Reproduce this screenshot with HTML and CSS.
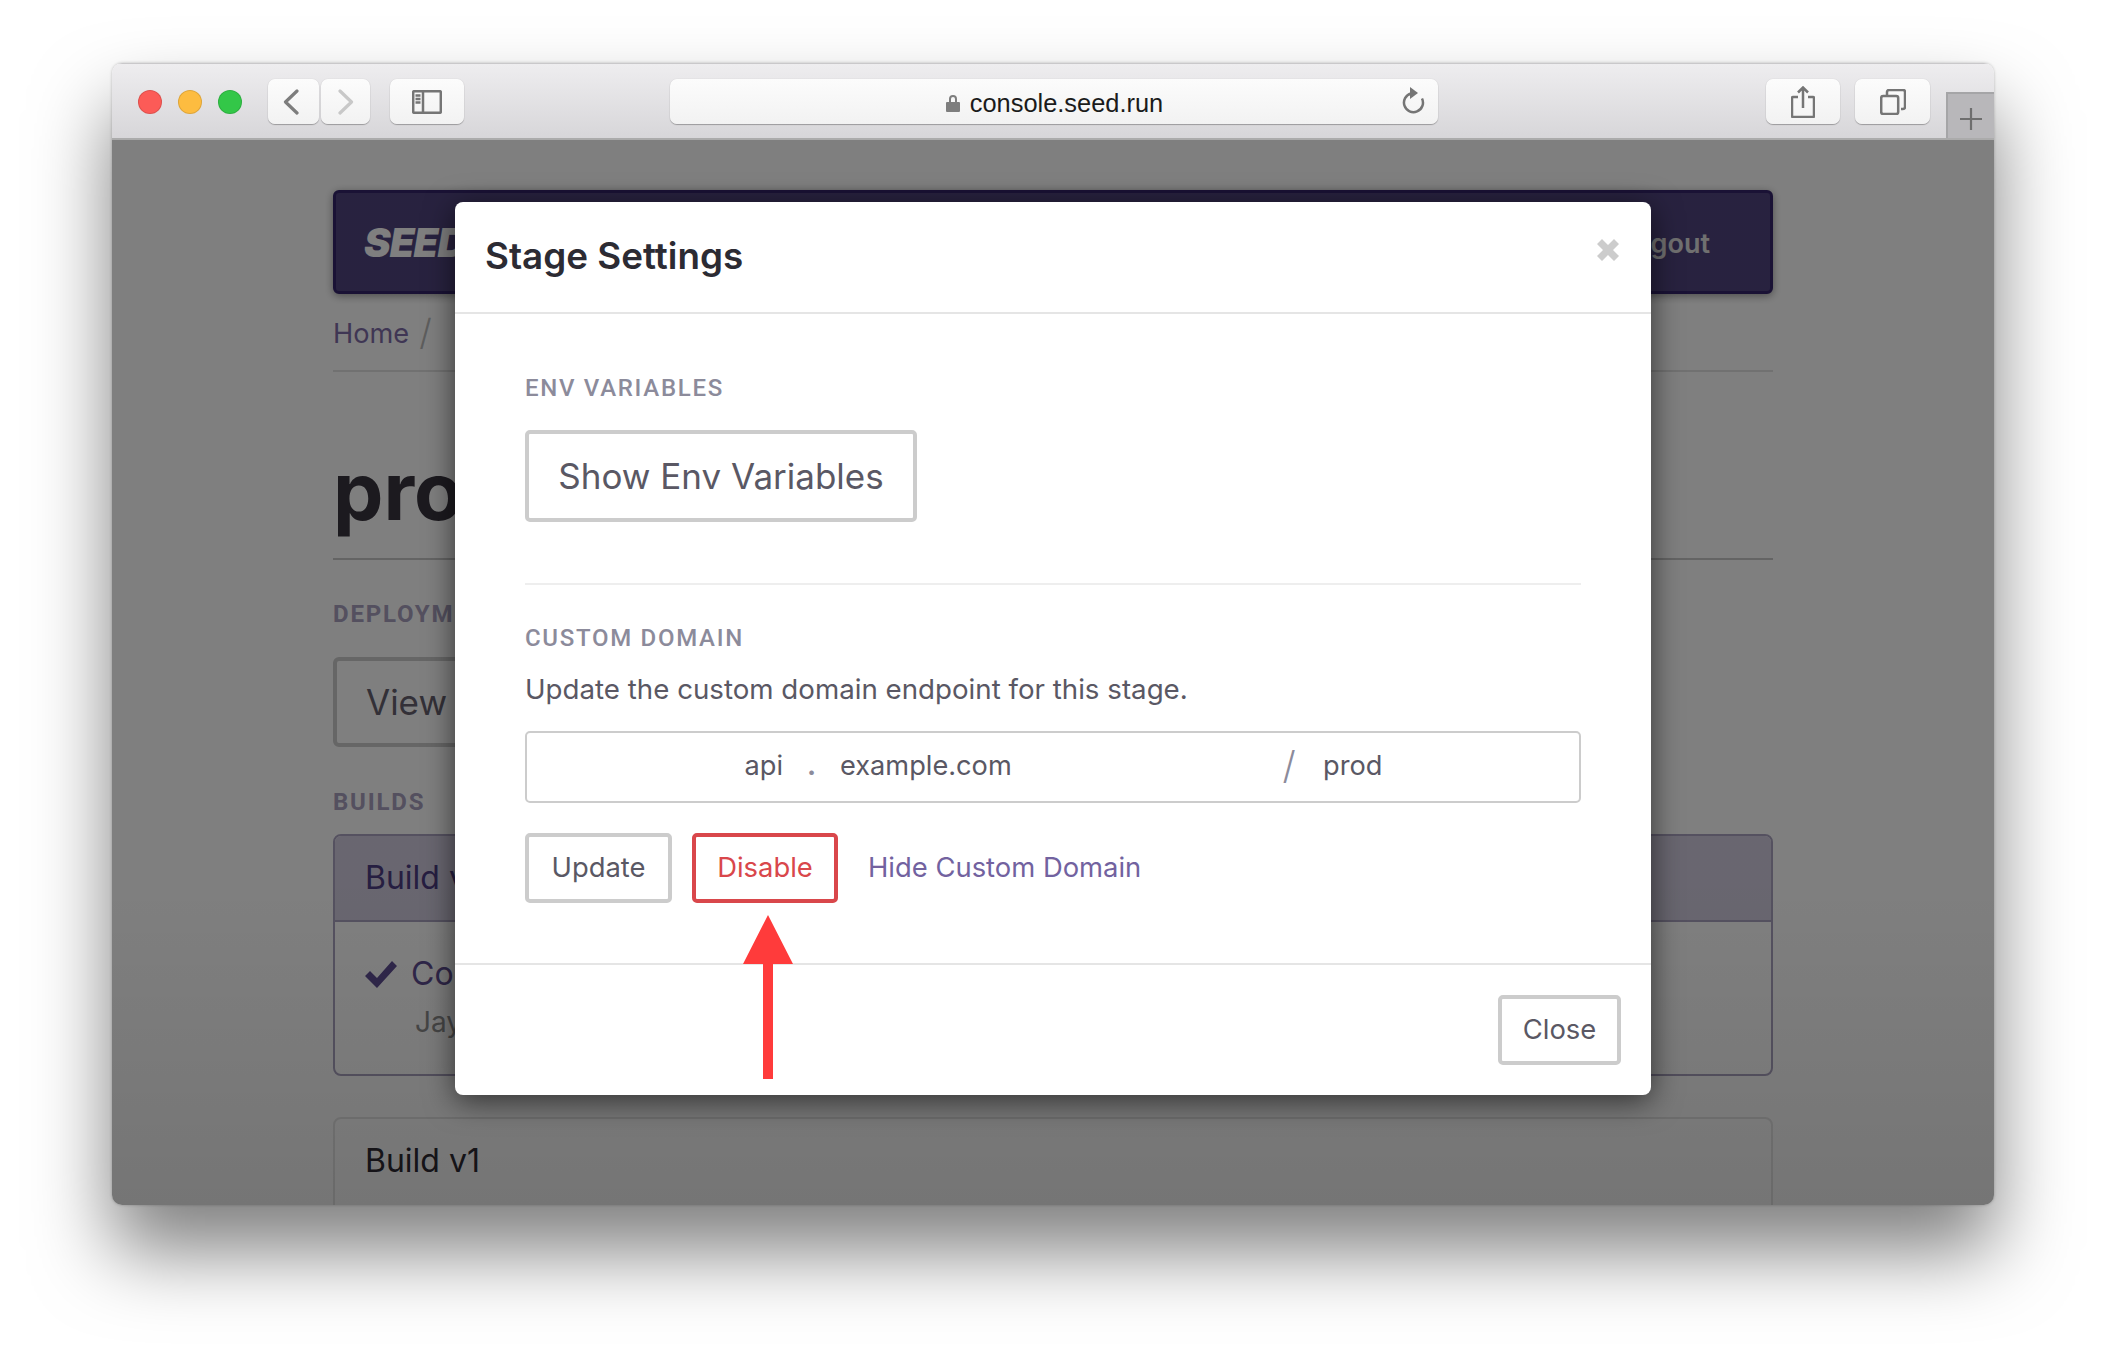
FILE: index.html
```html
<!DOCTYPE html>
<html lang="en">
<head>
<meta charset="utf-8">
<title>Stage Settings</title>
<link rel="stylesheet" href="styles.css">
</head>
<body>
<div class="window">
  <header class="toolbar">
    <div class="lights"><span class="light red"></span><span class="light yellow"></span><span class="light green"></span></div>
    <div class="nav-btns">
      <span class="tb-btn back"><svg width="16" height="26" viewBox="0 0 16 26"><path class="ic" d="M14 2 2.500 13 14 24"/></svg></span>
      <span class="tb-btn forward"><svg width="16" height="26" viewBox="0 0 16 26"><path class="ic ic-off" d="M2 2l11.500 11L2 24"/></svg></span>
    </div>
    <span class="tb-btn sidebar"><svg width="30" height="24" viewBox="0 0 30 24"><rect class="ic-thin" x="1.200" y="1.200" width="27.600" height="21.600" rx="1"/><path class="ic-thin" d="M11 1v22M3.500 5.500h5M3.500 9h5M3.500 12.500h5"/></svg></span>
    <div class="urlbar">
      <span class="url"><svg class="lock" width="16" height="20" viewBox="0 0 16 20"><path class="lock-shape" d="M4 9V6a4 4 0 0 1 8 0v3h2a1 1 0 0 1 1 1v8a1 1 0 0 1-1 1H2a1 1 0 0 1-1-1v-8a1 1 0 0 1 1-1zm2 0h4V6a2 2 0 0 0-4 0z"/></svg>console.seed.run</span>
      <svg class="reload" width="24" height="28" viewBox="0 0 24 28"><path class="ic-thin" d="M10 7.500a9.500 9.500 0 1 0 11 5"/><path class="arrowhead" d="M9 1l8 6-8 6z"/></svg>
    </div>
    <span class="tb-btn share"><svg width="24" height="32" viewBox="0 0 24 32"><path class="ic-thin" d="M7 11H2a1 1 0 0 0-1 1v18a1 1 0 0 0 1 1h20a1 1 0 0 0 1-1V12a1 1 0 0 0-1-1h-5M12 22V2M7 6.500 12 1.500 17 6.500"/></svg></span>
    <span class="tb-btn tabs"><svg width="26" height="26" viewBox="0 0 26 26"><rect class="ic-thin" x="1.200" y="7" width="17" height="18" rx="2"/><path class="ic-thin" d="M7 7V3a2 2 0 0 1 2-2h14a2 2 0 0 1 2 2v15a2 2 0 0 1-2 2h-2"/></svg></span>
    <span class="newtab"><svg width="24" height="24" viewBox="0 0 24 24"><path class="plus" d="M12 1v22M1 12h22"/></svg></span>
  </header>

  <div class="viewport">
    <main class="page">
      <nav class="topnav"><span class="brand">SEED</span><span class="logout">Logout</span></nav>
      <div class="crumbs"><span class="crumb-link">Home</span><span class="crumb-sep">/</span></div>
      <h1 class="stage-title">prod</h1>
      <div class="page-label label-deploy">DEPLOYMENTS</div>
      <div class="page-btn">View Deployments</div>
      <div class="page-label label-builds">BUILDS</div>
      <section class="card active">
        <div class="card-head">Build v2</div>
        <div class="card-body">
          <div class="commit"><svg class="check" width="32" height="28" viewBox="0 0 32 28"><path d="M0 16l5-5 7 7L27 1l5 5-20 22z"/></svg><span>Commit</span></div>
          <div class="author">Jay</div>
        </div>
      </section>
      <section class="card plain">
        <div class="card-head plain-head">Build v1</div>
      </section>
    </main>
    <div class="backdrop"></div>
    <aside class="modal">
      <div class="modal-head">
        <h2 class="modal-title">Stage Settings</h2>
        <svg class="close-x" width="22" height="22" viewBox="0 0 22 22"><path d="M5 0l6 6 6-6 5 5-6 6 6 6-5 5-6-6-6 6-5-5 6-6-6-6z"/></svg>
      </div>
      <div class="modal-body">
        <div class="label">ENV VARIABLES</div>
        <button class="btn btn-lg">Show Env Variables</button>
        <hr class="divider">
        <div class="label">CUSTOM DOMAIN</div>
        <p class="desc">Update the custom domain endpoint for this stage.</p>
        <div class="domain-input">
          <span class="f-sub">api</span>
          <span class="f-dot">.</span>
          <span class="f-domain">example.com</span>
          <span class="f-slash">/</span>
          <span class="f-path">prod</span>
        </div>
        <div class="actions">
          <button class="btn btn-md btn-update">Update</button>
          <button class="btn btn-md btn-danger">Disable</button>
          <a class="link" href="#">Hide Custom Domain</a>
        </div>
      </div>
      <div class="modal-foot"><button class="btn btn-md btn-close">Close</button></div>
    </aside>
    <svg class="arrow" width="50" height="164" viewBox="0 0 50 164"><path d="M25 0l25 49H30v115H20V49H0z"/></svg>
  </div>
</div>
</body>
</html>
```

FILE: styles.css
```css
* { box-sizing: border-box; }
html, body { margin: 0; height: 100%; }
body {
  background: #fff;
  padding: 63px 112px 0;
  font-family: Inter, "Liberation Sans", sans-serif;
  overflow: hidden;
}
.window {
  width: 1882px;
  height: 1142px;
  border-radius: 10px;
  display: flex;
  flex-direction: column;
  box-shadow: 0 46px 78px rgba(0,0,0,.5), 0 0 3px rgba(0,0,0,.25);
  overflow: hidden;
  background: #fff;
}
.toolbar {
  height: 77px;
  flex: none;
  display: flex;
  align-items: flex-start;
  padding-top: 15px;
  background: linear-gradient(#eeedef, #d7d6d9);
  border-top: 1px solid #c9c8ca;
  border-bottom: 2px solid #ababab;
  position: relative;
}
.lights { display: flex; gap: 16px; margin: 11px 0 0 26px; }
.light { width: 24px; height: 24px; border-radius: 50%; border: 1px solid rgba(0,0,0,.12); }
.red { background: #fc5b57; }
.yellow { background: #fdbc40; }
.green { background: #33c748; }
.nav-btns { display: flex; gap: 2px; margin-left: 26px; }
.tb-btn {
  height: 45px;
  display: flex;
  align-items: center;
  justify-content: center;
  background: linear-gradient(#fcfcfc, #f2f2f2);
  border-radius: 7px;
  box-shadow: 0 1px 1px rgba(0,0,0,.28), 0 0 1px rgba(0,0,0,.2);
}
.back { width: 51px; padding-right: 6px; }
.forward { width: 49px; padding-right: 0; }
.sidebar { width: 74px; margin-left: 20px; }
.urlbar {
  width: 768px;
  height: 45px;
  margin-left: 206px;
  position: relative;
  display: flex;
  align-items: center;
  justify-content: center;
  background: linear-gradient(#fcfcfc, #f2f2f2);
  border-radius: 7px;
  box-shadow: 0 1px 1px rgba(0,0,0,.28), 0 0 1px rgba(0,0,0,.2);
}
.url {
  display: flex;
  align-items: center;
  gap: 9px;
  padding-top: 3px;
  font: 25.4px "Liberation Sans", sans-serif;
  color: #1b1b1b;
}
.lock-shape { fill: #7e7e7e; fill-rule: evenodd; }
.reload { position: absolute; right: 13px; top: 7px; }
.ic { fill: none; stroke: #7d7d7d; stroke-width: 3.200; stroke-linecap: round; stroke-linejoin: round; }
.ic-off { stroke: #c8c8c8; }
.ic-thin { fill: none; stroke: #757575; stroke-width: 2.500; }
.arrowhead { fill: #757575; }
.share { width: 74px; margin-left: 328px; }
.tabs { width: 75px; margin-left: 15px; }
.newtab {
  position: absolute;
  right: 0;
  bottom: 0;
  width: 48px;
  height: 46px;
  display: flex;
  align-items: center;
  justify-content: center;
  padding-top: 6px;
  background: #b8b7ba;
  border: 2px solid #a5a5a7;
  border-right: 0;
  border-bottom: 0;
}
.plus { fill: none; stroke: #6e6e6e; stroke-width: 2.200; }

.viewport { position: relative; flex: 1; overflow: hidden; }
.page { width: 1440px; margin-left: 221px; padding-top: 50px; color: #38343e; }
.topnav {
  height: 104px;
  background: #50447f;
  border: 3px solid #34246a;
  border-radius: 6px;
  display: flex;
  align-items: center;
  justify-content: space-between;
  padding: 0 60px 0 28px;
  box-shadow: 0 2px 8px rgba(0,0,0,.4);
}
.brand { font: italic 900 40px Inter, sans-serif; color: #fff; letter-spacing: -1px; }
.logout { font-size: 27px; font-weight: 600; color: #e0e0e0; padding-top: 2px; }
.crumbs {
  height: 78px;
  border-bottom: 2px solid #e2e2e2;
  display: flex;
  align-items: center;
  gap: 10px;
  font-size: 27.200px;
}
.crumb-link { color: #7e6da8; padding-top: 2px; }
.crumb-sep { color: #bbb; font-size: 36px; font-weight: 300; }
.stage-title {
  height: 188px;
  margin: 0;
  padding-top: 74px;
  border-bottom: 2px solid #c8c8c8;
  font-size: 80px;
  line-height: 90px;
  font-weight: 700;
}
.page-label { font: 700 24px Roboto, sans-serif; letter-spacing: 1.800px; color: #a8a0be; }
.label-deploy { margin-top: 42px; line-height: 24px; }
.page-btn {
  width: 500px;
  height: 90px;
  margin-top: 31px;
  padding-left: 29px;
  border: 4px solid #ccc;
  border-radius: 6px;
  font-size: 35px;
  line-height: 82px;
  color: #66616f;
}
.label-builds { margin-top: 43px; line-height: 24px; }
.card { border-radius: 8px; border: 2px solid #aaa3c0; }
.active { height: 242px; margin-top: 20px; overflow: hidden; }
.card-head {
  height: 86px;
  padding-left: 30px;
  font-size: 32px;
  line-height: 84px;
  color: #4c3c82;
  background: #d2cde0;
  border-bottom: 2px solid #aaa3c0;
}
.card-body { padding: 32px 30px; font-size: 32px; color: #5f4e93; }
.commit { display: flex; align-items: center; gap: 14px; }
.check { fill: #5f4e93; }
.author { margin: 12px 0 0 50px; font-size: 28px; color: #8f8f8f; }
.plain { height: 200px; margin-top: 41px; border: 2px solid #e6e6e6; }
.plain-head { background: none; border: 0; color: #2e2a33; height: 83px; line-height: 83px; }

.backdrop { position: absolute; inset: 0; background: linear-gradient(rgba(0,0,0,.5) 70%, rgba(0,0,0,.54)); }
.modal {
  position: absolute;
  left: 343px;
  top: 62px;
  width: 1196px;
  height: 893px;
  background: #fff;
  border-radius: 8px;
  box-shadow: 0 6px 30px rgba(0,0,0,.6);
  display: flex;
  flex-direction: column;
}
.modal-head {
  height: 112px;
  flex: none;
  padding: 0 30px;
  border-bottom: 2px solid #e5e5e5;
  display: flex;
  justify-content: space-between;
}
.modal-title {
  margin: 29px 0 0;
  font-size: 36.800px;
  line-height: 50px;
  font-weight: 600;
  color: #2c2b33;
}
.close-x { fill: #cccccc; margin: 37px 2px 0 0; }
.modal-body { flex: 1; padding: 62px 70px 0; }
.label {
  font: 500 24px/24px Roboto, sans-serif;
  letter-spacing: 1.700px;
  color: #8c8b9b;
}
.btn {
  display: block;
  font-family: inherit;
  background: #fff;
  border: 4px solid #ccc;
  border-radius: 5px;
  color: #5a5864;
  padding: 0;
  text-align: center;
}
.btn-lg { width: 392px; height: 92px; margin-top: 30px; font-size: 35px; }
.divider { height: 2px; margin: 61px 0 41px; border: 0; background: #eeeeee; }
.desc { margin: 19px 0 22px; font-size: 27.700px; line-height: 40px; color: #5a5864; }
.domain-input {
  height: 72px;
  display: flex;
  align-items: center;
  padding-bottom: 4px;
  border: 2px solid #ccc;
  border-radius: 5px;
  font-size: 27.200px;
  color: #5a5864;
}
.f-sub { width: 256px; text-align: right; }
.f-dot { width: 57px; text-align: center; font-weight: 700; color: #8c8b9b; }
.f-domain { width: 434px; }
.f-slash { width: 30px; text-align: center; font-size: 38px; font-weight: 300; color: #8c8b9b; }
.f-path { padding-left: 19px; }
.actions { display: flex; align-items: center; margin-top: 30px; }
.btn-md { height: 70px; padding-bottom: 2px; font-size: 27.400px; }
.btn-update { width: 147px; }
.btn-danger { width: 146px; margin-left: 20px; color: #d9474b; border-color: #d9474b; }
.link { margin-left: 30px; padding-bottom: 2px; font-size: 27.400px; color: #72629f; text-decoration: none; }
.modal-foot {
  height: 132px;
  flex: none;
  border-top: 2px solid #e5e5e5;
  display: flex;
  justify-content: flex-end;
  align-items: flex-start;
  padding: 30px 30px 0 0;
}
.btn-close { width: 123px; }
.arrow { position: absolute; left: 631px; top: 775px; fill: #ff3b3b; }
```
